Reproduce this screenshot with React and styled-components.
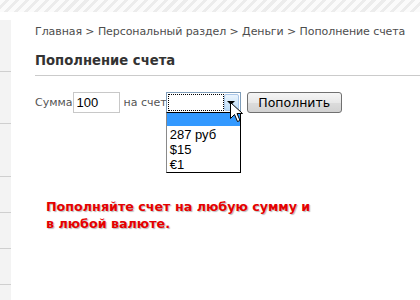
import styled, { createGlobalStyle } from 'styled-components';

const GlobalStyle = createGlobalStyle`
  html, body {
    margin: 0;
    padding: 0;
    background: #fff;
  }
  body {
    width: 420px;
    height: 300px;
    overflow: hidden;
    font-family: 'DejaVu Sans', Tahoma, sans-serif;
  }
`;

const Page = styled.div`
  width: 420px;
  height: 300px;
  display: flex;
  flex-direction: column;
  overflow: hidden;
`;

const TopStripe = styled.div`
  height: 12px;
  flex-shrink: 0;
  background: repeating-linear-gradient(
    135deg,
    #fbfbfb 0px,
    #fbfbfb 4px,
    #ececec 4px,
    #ececec 7px
  );
`;

const Body = styled.div`
  flex: 1;
  min-height: 0;
  display: flex;
  padding-top: 8px;
  overflow: hidden;
`;

const Sidebar = styled.div`
  width: 11px;
  flex-shrink: 0;
  display: flex;
  flex-direction: column;
  background: #f3f3f3;
`;

const SideItem = styled.div`
  height: ${p => p.h}px;
  border-bottom: 1px solid #cfcfcf;
  flex-shrink: 0;
`;

const Content = styled.div`
  flex: 1;
  min-width: 0;
  padding-left: 24px;
  position: relative;
`;

const Breadcrumb = styled.div`
  margin-top: 5px;
  font-size: 11px;
  letter-spacing: -0.08px;
  line-height: 14px;
  color: #4d4d4d;
  white-space: nowrap;
`;

const Title = styled.h1`
  margin: 14px 0 0;
  padding-bottom: 6px;
  font-size: 13.2px;
  line-height: 16px;
  font-weight: bold;
  color: #333;
  border-bottom: 1px solid #cbcbcb;
`;

const FormRow = styled.div`
  margin-top: 16px;
  display: flex;
  align-items: center;
  font-size: 11px;
  color: #555;
  height: 21px;
`;

const Label = styled.span`
  margin-right: ${p => p.gap || 0}px;
`;

const AmountInput = styled.input`
  box-sizing: border-box;
  width: 47px;
  height: 21px;
  margin-right: 4px;
  border: 1px solid #c8c8c8;
  padding: 0 3px;
  font-family: 'Liberation Sans', Arial, sans-serif;
  font-size: 13px;
  color: #000;
  outline: none;
`;

const SelectWrap = styled.div`
  position: relative;
  margin-left: -1px;
  margin-right: 6px;
`;

const SelectBox = styled.div`
  box-sizing: border-box;
  width: 75px;
  height: 21px;
  border: 1px solid #7f9db9;
  display: flex;
  padding: 1px;
  background: #fff;
`;

const FocusField = styled.div`
  flex: 1;
  border: 1px dotted #000;
  background: #fff;
`;

const ArrowButton = styled.div`
  width: 15px;
  box-sizing: border-box;
  border: 1px solid #a9c6e8;
  border-radius: 2px;
  background: linear-gradient(#eaf4fd, #bcdcf7);
  display: flex;
  align-items: center;
  justify-content: center;
`;

const Triangle = styled.div`
  width: 0;
  height: 0;
  border-left: 4px solid transparent;
  border-right: 4px solid transparent;
  border-top: 4px solid #000;
`;

const DropList = styled.div`
  position: absolute;
  top: 20px;
  left: 0;
  width: 75px;
  box-sizing: border-box;
  border: 1px solid #000;
  border-left-color: #8a8a8a;
  background: #fff;
  font-family: 'Liberation Sans', Arial, sans-serif;
  font-size: 13px;
  color: #000;
  z-index: 2;
`;

const Option = styled.div`
  height: ${p => (p.blank ? 13 : 15)}px;
  line-height: 15px;
  padding-left: 3px;
  background: ${p => (p.selected ? '#3399ff' : '#fff')};
  color: ${p => (p.selected ? '#fff' : '#000')};
  margin-bottom: ${p => (p.blank ? 1 : 0)}px;
`;

const Cursor = styled.svg`
  position: absolute;
  left: 64px;
  top: 10px;
  z-index: 3;
`;

const SubmitButton = styled.button`
  box-sizing: border-box;
  height: 21px;
  width: 95px;
  padding: 0;
  border: 1px solid #707070;
  border-radius: 3px;
  background: linear-gradient(#f6f6f6 0%, #e8e8e8 50%, #dcdcdc 51%, #d2d2d2 100%);
  font-family: 'DejaVu Sans', Tahoma, sans-serif;
  font-size: 12.5px;
  color: #000;
`;

const Promo = styled.p`
  margin: 85px 0 0 11px;
  font-size: 12.7px;
  line-height: 17px;
  font-weight: bold;
  color: #e60000;
  text-shadow: 1px 1px 1px #b8b8b8;
`;

const sideHeights = [51, 51, 52, 35, 35, 35, 40];

export default function App() {
  return (
    <Page>
      <GlobalStyle />
      <TopStripe />
      <Body>
        <Sidebar>
          {sideHeights.map((h, i) => (
            <SideItem key={i} h={h} />
          ))}
        </Sidebar>
        <Content>
          <Breadcrumb>Главная &gt; Персональный раздел &gt; Деньги &gt; Пополнение счета</Breadcrumb>
          <Title>Пополнение счета</Title>
          <FormRow>
            <Label>Сумма</Label>
            <AmountInput defaultValue="100" />
            <Label>на счет</Label>
            <SelectWrap>
              <SelectBox>
                <FocusField />
                <ArrowButton>
                  <Triangle />
                </ArrowButton>
              </SelectBox>
              <DropList>
                <Option blank selected />
                <Option>287 руб</Option>
                <Option>$15</Option>
                <Option>€1</Option>
              </DropList>
              <Cursor width="13" height="21" viewBox="0 0 13 21">
                <path
                  d="M0.5 0.5 L0.5 16.5 L4.5 12.5 L7.5 19.5 L10 18.5 L7 11.5 L12.5 11.5 Z"
                  fill="#fff"
                  stroke="#000"
                  strokeWidth="1"
                />
              </Cursor>
            </SelectWrap>
            <SubmitButton>Пополнить</SubmitButton>
          </FormRow>
          <Promo>
            Пополняйте счет на любую сумму и
            <br />
            в любой валюте.
          </Promo>
        </Content>
      </Body>
    </Page>
  );
}
